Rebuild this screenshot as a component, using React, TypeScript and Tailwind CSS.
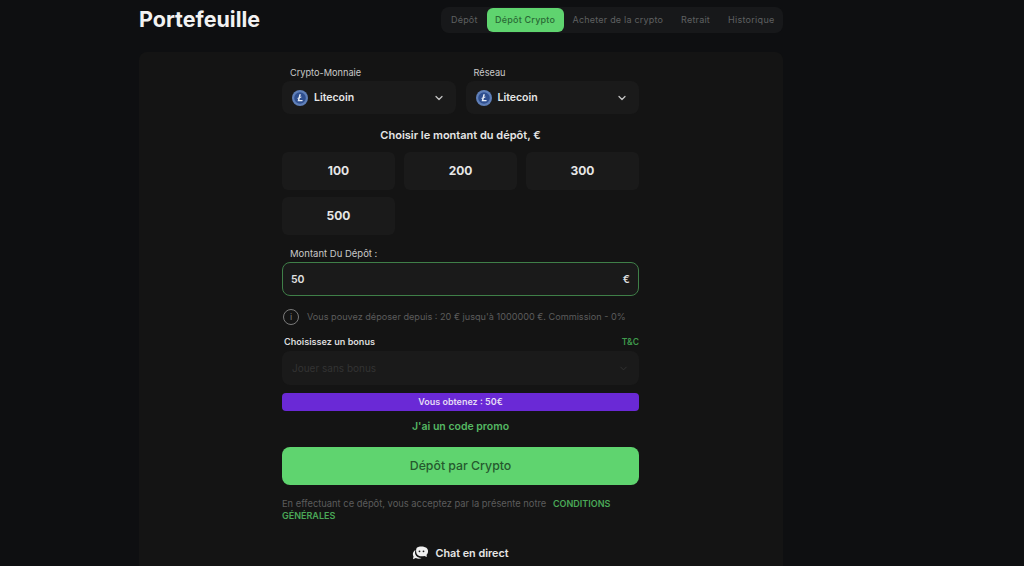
import { ChevronDown } from "lucide-react";

const FONT = "font-['Inter','Liberation_Sans',sans-serif]";
const AMOUNTS = [100, 200, 300, 500];

const LitecoinIcon = () => (
  <svg width="16" height="16" viewBox="0 0 16 16" className="shrink-0">
    <circle cx="8" cy="8" r="8" fill="#5f7fb8" />
    <circle cx="8" cy="8" r="5.800" fill="#2f4f8f" />
    <path d="M7.300 4.200h1.600L8.200 7l1.300-.5-.2.9-1.400.5-.5 2h3.300l-.3 1.300H5.600l.7-2.800-1 .4.2-.9 1.100-.4z" fill="#e8edf6" />
  </svg>
);

const CoinSelect = ({ label }: { label: string }) => (
  <div className="flex-1">
    <p className="h-[17px] pl-2 text-[9.200px] leading-[17px] text-[#c9c9c9]">{label}</p>
    <div className="flex h-[33px] items-center rounded-lg bg-[#1a1a1a] pl-[10px] pr-[11px]">
      <LitecoinIcon />
      <span className="ml-[6px] flex-1 text-[10.500px] font-semibold text-[#e6e6e6]">Litecoin</span>
      <ChevronDown size={12} strokeWidth={2.500} className="text-[#c4c4c4]" />
    </div>
  </div>
);

const ChatIcon = () => (
  <svg width="17" height="16" viewBox="0 0 17 16">
    <path d="M5 1.500C7 0 11.500 0 14 1.500c2.500 1.700 2.800 5.300.6 7.300l.2 2.200-2.400-1.100C9.500 10.800 6 10.200 4.800 8 3.800 6 3.800 3 5 1.500z" fill="#f0f0f0" />
    <path d="M3.500 4C1.200 5.200.2 8 1.500 10.300l-.5 3 2.800-1.200c2 1 4.200.9 5.800-.1C6.500 12 4 10.500 3.300 8.300 2.900 7 3 5.300 3.500 4z" fill="#f0f0f0" />
    <circle cx="7.500" cy="5.300" r="0.900" fill="#1a1a1a" />
    <circle cx="11.500" cy="5.300" r="0.900" fill="#1a1a1a" />
  </svg>
);

export default function App() {
  return (
    <div className={`flex h-[566px] w-[1024px] flex-col overflow-hidden bg-[#0e0f11] pl-[139px] pr-[241px] ${FONT}`}>
      <header className="flex h-[52px] shrink-0 justify-between">
        <h1 className="mt-[7px] text-[21.500px] font-bold leading-6 text-[#f2f2f2]">Portefeuille</h1>
        <nav className="mt-[7px] flex h-[26px] w-[342px] items-center rounded-lg bg-[#17181a] pl-[10px] text-[9px] tracking-[0.200px] text-[#5f6061]">
          <span>Dépôt</span>
          <span className="ml-[9px] flex h-[24px] w-[77px] items-center justify-center rounded-md bg-[#5fd46f] font-medium text-[#2a6a35]">Dépôt Crypto</span>
          <span className="ml-[9px]">Acheter de la crypto</span>
          <span className="ml-[18px]">Retrait</span>
          <span className="ml-[18px] tracking-[0.300px]">Historique</span>
        </nav>
      </header>

      <main className="flex flex-1 justify-center rounded-t-lg bg-[#141414] pr-px pt-[12px]">
        <div className="w-[357px]">
          <div className="flex gap-[10px]">
            <CoinSelect label="Crypto-Monnaie" />
            <CoinSelect label="Réseau" />
          </div>

          <p className="mt-[13px] text-center text-[11px] font-semibold leading-[16px] text-[#e6e6e6]">Choisir le montant du dépôt, €</p>

          <div className="mt-[9px] grid grid-cols-3 gap-x-[9px] gap-y-[7px]">
            {AMOUNTS.map(a => (
              <div key={a} className="flex h-[38px] items-center justify-center rounded-md bg-[#1a1a1a] pb-px text-[12px] font-bold text-[#e6e6e6]">{a}</div>
            ))}
          </div>

          <p className="mt-[11px] pl-2 text-[9.500px] leading-[16px] text-[#c9c9c9]">Montant Du Dépôt :</p>
          <div className="flex h-[34px] items-center justify-between rounded-lg border border-[#3f7f48] bg-[#1a1a1a] px-[8px] pt-px text-[10.500px] font-semibold text-[#e0e0e0]">
            <span>50</span>
            <span>€</span>
          </div>

          <div className="mt-[12px] flex h-[17px] items-center pl-[1px] text-[9.150px] text-[#5c5c5c]">
            <span className="flex h-[16px] w-[16px] shrink-0 items-center justify-center rounded-full border border-[#7a7a7a] text-[9px] leading-none text-[#7a7a7a]">i</span>
            <span className="ml-[8px] whitespace-nowrap">Vous pouvez déposer depuis : 20 € jusqu'à 1000000 €. Commission - 0%</span>
          </div>

          <div className="mt-[9px] flex h-[16px] items-center justify-between pl-[2px] text-[9.100px] font-semibold">
            <span className="text-[#dcdcdc]">Choisissez un bonus</span>
            <span className="text-[8.500px] text-[#3f9a4c]">T&amp;C</span>
          </div>

          <div className="mt-[1px] flex h-[34px] items-center justify-between rounded-lg bg-[#1a1a1a] px-[10px] text-[10px] text-[#333333]">
            <span>Jouer sans bonus</span>
            <ChevronDown size={11} className="text-[#333333]" />
          </div>

          <div className="mt-[8px] flex h-[18px] items-center justify-center rounded-sm bg-[#6a29d6] text-[9px] font-semibold text-[#e4dcf5]">Vous obtenez : 50€</div>

          <p className="mt-[8px] text-center text-[10.500px] font-semibold leading-[16px] text-[#55b863]">J'ai un code promo</p>

          <button className="mt-[12px] block h-[38px] w-full rounded-lg bg-[#5fd46f] text-[12.300px] font-medium text-[#26592e]">Dépôt par Crypto</button>

          <p className="mt-[13px] text-[9.350px] leading-[12px] text-[#5c5c5c]">
            En effectuant ce dépôt, vous acceptez par la présente notre{" "}
            <span className="ml-1 text-[9px] font-semibold text-[#4aa857]">CONDITIONS GÉNÉRALES</span>
          </p>

          <div className="mt-[24px] flex items-center justify-center gap-[6px] text-[10.800px] font-semibold text-[#e6e6e6]">
            <ChatIcon />
            <span>Chat en direct</span>
          </div>
        </div>
      </main>
    </div>
  );
}
